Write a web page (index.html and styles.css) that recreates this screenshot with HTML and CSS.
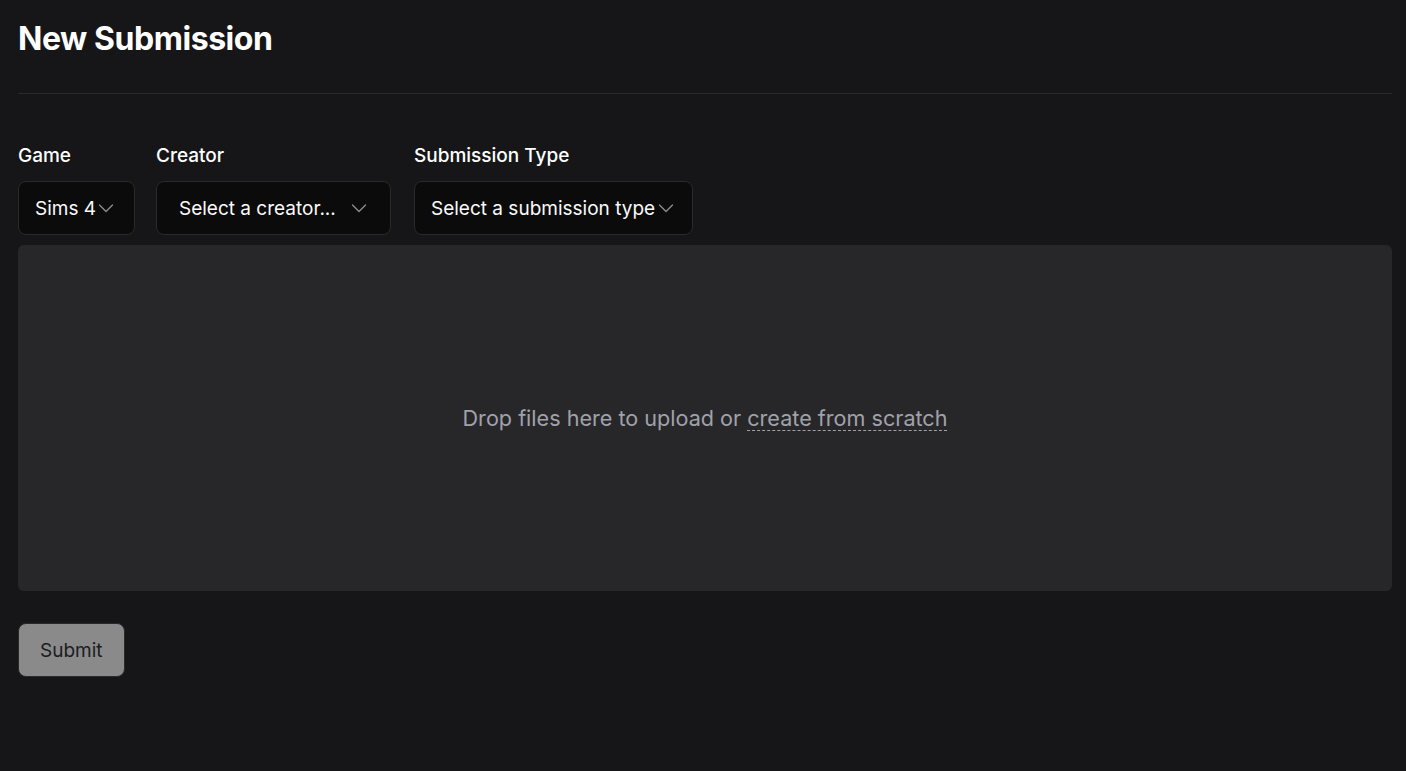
FILE: index.html
```html
<!DOCTYPE html>
<html>
<head>
<meta charset="utf-8">
<link rel="stylesheet" href="styles.css">
</head>
<body>
<main class="page">
  <h1 class="title">New Submission</h1>
  <hr class="divider">
  <div class="fields">
    <div class="field">
      <label class="label">Game</label>
      <button class="select select-game"><span>Sims 4</span><svg class="chev" viewBox="0 0 16 16"><path d="M1.5 5l6.5 6.5L14.5 5"/></svg></button>
    </div>
    <div class="field field-creator">
      <label class="label">Creator</label>
      <button class="select select-creator"><span>Select a creator...</span><svg class="chev" viewBox="0 0 16 16"><path d="M1.5 5l6.5 6.5L14.5 5"/></svg></button>
    </div>
    <div class="field field-type">
      <label class="label">Submission Type</label>
      <button class="select select-type"><span>Select a submission type</span><svg class="chev" viewBox="0 0 16 16"><path d="M1.5 5l6.5 6.5L14.5 5"/></svg></button>
    </div>
  </div>
  <div class="dropzone">
    <p class="drop-text">Drop files here to upload or <a class="scratch">create from scratch</a></p>
  </div>
  <button class="submit">Submit</button>
</main>
</body>
</html>
```
FILE: styles.css
```css
html, body {
  margin: 0;
  padding: 0;
  background: #161618;
  font-family: Inter, "Noto Sans", sans-serif;
  color: #fafafa;
}
.page {
  padding: 0 14px 0 18px;
}
.title {
  margin: 0;
  padding-top: 19px;
  font-size: 32px;
  line-height: 40px;
  font-weight: 700;
  letter-spacing: -0.45px;
  color: #ffffff;
}
.divider {
  border: 0;
  border-top: 1px solid #2a2a2d;
  margin: 34px 0 0 0;
}
.fields {
  display: flex;
  margin-top: 50px;
}
.field {
  display: flex;
  flex-direction: column;
}
.field-creator { margin-left: 21px; }
.field-type { margin-left: 23px; }
.label {
  font-size: 19px;
  line-height: 24px;
  font-weight: 500;
  color: #ffffff;
  margin-bottom: 13px;
}
.select {
  display: flex;
  align-items: center;
  height: 54px;
  box-sizing: border-box;
  background: #0b0b0c;
  border: 1px solid #2a2a2d;
  border-radius: 8px;
  color: #fafafa;
  font-family: inherit;
  font-size: 19px;
  padding: 0 0 0 16px;
  cursor: pointer;
}
.select-game { width: 117px; }
.select-creator { width: 235px; padding-left: 22px; }
.select-type { width: 279px; }
.select-creator .chev { margin-left: 15px; }
.select-type .chev { margin-left: 3px; }
.chev {
  flex: none;
  width: 16px;
  height: 16px;
  margin-left: 2px;
  fill: none;
  stroke: #8e8e93;
  stroke-width: 1.3;
  stroke-linecap: round;
  stroke-linejoin: round;
}
.dropzone {
  margin-top: 10px;
  height: 346px;
  background: #27272a;
  border-radius: 6px;
  display: flex;
  align-items: center;
  justify-content: center;
}
.drop-text {
  margin: 0;
  font-size: 21.6px;
  color: #a1a1aa;
}
.scratch {
  color: #a1a1aa;
  text-decoration: underline dashed;
  text-underline-offset: 4px;
  text-decoration-thickness: 1px;
  cursor: pointer;
}
.submit {
  margin-top: 32px;
  height: 54px;
  padding: 0 21px;
  background: #8a8a8a;
  border: 1px solid #2a2a2d;
  border-radius: 8px;
  color: #1c1c1e;
  font-family: inherit;
  font-size: 19px;
}
```
